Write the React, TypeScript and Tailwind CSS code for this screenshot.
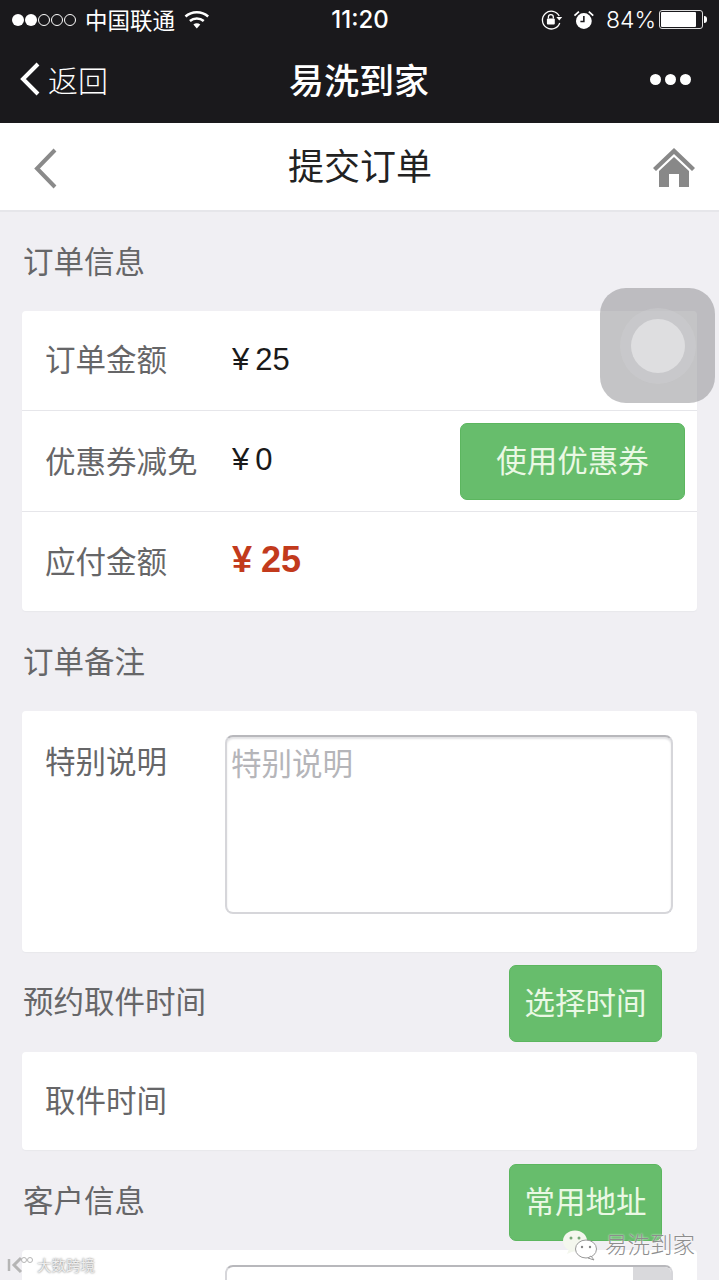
import React from "react";

function Label({ children, className = "pb-[4px]" }: { children: React.ReactNode; className?: string }) {
  return <span className={"w-[185px] shrink-0 text-[30.5px] leading-[40px] text-[#666668] " + className}>{children}</span>;
}
function Green({ children, className = "" }: { children: React.ReactNode; className?: string }) {
  return (
    <div className={"flex h-[77px] items-center justify-center rounded-[7px] border border-[#5cb65f] bg-[#67bd6c] pb-[3px] text-[30.5px] text-[#eaf8e4] " + className}>
      {children}
    </div>
  );
}
function SectionTitle({ children, className = "pb-[2px]" }: { children: React.ReactNode; className?: string }) {
  return <span className={"text-[30.5px] leading-[40px] text-[#666668] " + className}>{children}</span>;
}
function Amount({ value }: { value: string }) {
  return (
    <span className="ml-[2px] flex pb-[2px] font-['Liberation_Sans',sans-serif] text-[31px] leading-[40px] text-[#1a1a1a]">
      <span>¥</span>
      <span className="ml-[6px]">{value}</span>
    </span>
  );
}

export default function App() {
  return (
    <div className="relative h-[1280px] w-[719px] overflow-hidden bg-[#f0eff3] font-['Noto_Sans_CJK_SC','Noto_Sans',sans-serif]">
      {/* dark header */}
      <div className="h-[123px] bg-[#1a191c] text-white">
        <div className="flex h-[39px] items-center pl-[12px] pr-[12px]">
          <div className="flex items-center gap-[1px]">
            <span className="h-[12px] w-[12px] rounded-full bg-white" />
            <span className="h-[12px] w-[12px] rounded-full bg-white" />
            <span className="h-[12px] w-[12px] rounded-full border border-white" />
            <span className="h-[12px] w-[12px] rounded-full border border-white" />
            <span className="h-[12px] w-[12px] rounded-full border border-white" />
          </div>
          <span className="ml-[9px] w-[100px] pb-[2px] text-[22.5px] leading-[30px]">中国联通</span>
          <svg width="26" height="20" viewBox="0 0 26 20">
            <path d="M1.500 6.500C8 .8 18 .8 24.500 6.500" stroke="#fff" strokeWidth="2.600" fill="none" />
            <path d="M6 11C10 7.600 16 7.600 20 11" stroke="#fff" strokeWidth="2.600" fill="none" />
            <path d="M9.500 14.500C11.500 12.800 14.500 12.800 16.500 14.500L13 18.500Z" fill="#fff" />
          </svg>
          <span className="ml-[121px] w-[60px] text-center font-['Inter',sans-serif] text-[24px] font-medium">11:20</span>
          <svg width="24" height="22" viewBox="0 0 24 22" className="ml-[150px]" fill="none">
            <path d="M19.500 7A9 9 0 1 0 20 14" stroke="#fff" strokeWidth="1.300" />
            <path d="M16.500 8h6l-3 3.500z" fill="#fff" />
            <rect x="7" y="9.500" width="8" height="6" rx="1" fill="#fff" />
            <path d="M8.500 9.500V8a2.500 2.500 0 0 1 5 0v1.500" stroke="#fff" strokeWidth="1.300" />
          </svg>
          <svg width="22" height="22" viewBox="0 0 22 22" className="ml-[10px]" fill="none">
            <circle cx="11" cy="12" r="8" fill="#fff" />
            <path d="M11 7v5.500H7.500" stroke="#1a191c" strokeWidth="1.600" />
            <path d="M1.500 6.500 6 2.500M20.500 6.500 16 2.500" stroke="#fff" strokeWidth="1.800" />
          </svg>
          <span className="ml-[11px] w-[48px] font-['Inter',sans-serif] text-[23px] font-light leading-[30px]">84%</span>
          <div className="ml-[5px] flex items-center">
            <div className="h-[19px] w-[44px] rounded-[3px] border border-[#ddd] p-[1px]">
              <div className="h-full w-[35px] rounded-[1px] bg-white" />
            </div>
            <span className="ml-[1px] h-[7px] w-[3px] rounded-r-full bg-white" />
          </div>
        </div>
        <div className="flex h-[84px] items-center pb-[4px]">
          <svg width="24" height="36" viewBox="0 0 24 36" className="ml-[19px]" fill="none">
            <path d="M19 3 4 18l15 15" stroke="#fff" strokeWidth="4" />
          </svg>
          <span className="ml-[5px] w-[80px] text-[30px] font-light">返回</span>
          <span className="ml-[161px] w-[140px] whitespace-nowrap pb-[2px] text-center text-[35px] font-medium leading-none">易洗到家</span>
          <div className="ml-[221px] flex gap-[4px]">
            <span className="h-[11px] w-[11px] rounded-full bg-white" />
            <span className="h-[11px] w-[11px] rounded-full bg-white" />
            <span className="h-[11px] w-[11px] rounded-full bg-white" />
          </div>
        </div>
      </div>

      {/* white title bar */}
      <div className="flex h-[89px] items-center border-b-[2px] border-[#e6e6ea] bg-white">
        <svg width="26" height="42" viewBox="0 0 26 42" className="ml-[32px] mt-[3px]" fill="none">
          <path d="M23 3 5 21.500 23 40" stroke="#8a8a8a" strokeWidth="4" />
        </svg>
        <span className="ml-[230px] w-[143px] whitespace-nowrap pb-[6px] text-center text-[36px] leading-none text-[#222]">提交订单</span>
        <svg width="44" height="42" viewBox="0 0 44 42" className="ml-[221px]">
          <path d="M1 22 22 2l21 20-3 3L22 8 4 25Z" fill="#888" />
          <path d="M7 25 22 11l15 14v16H27V28H17v13H7Z" fill="#888" />
        </svg>
      </div>

      <div className="px-[22px]">
        <div className="flex h-[99px] items-center pl-[1px]">
          <SectionTitle className="pb-[4px]">订单信息</SectionTitle>
        </div>
        <div className="rounded-[4px] bg-white shadow-[0_1px_1px_#e8e8ec]">
          <div className="flex h-[100px] items-center border-b border-[#e6e6ea] pl-[23px]">
            <Label className="pb-[6px]">订单金额</Label>
            <Amount value="25" />
          </div>
          <div className="flex h-[101px] items-center border-b border-[#e6e6ea] pl-[23px] pr-[12px]">
            <Label className="pb-[2px]">优惠券减免</Label>
            <Amount value="0" />
            <Green className="ml-auto w-[225px]">使用优惠券</Green>
          </div>
          <div className="flex h-[99px] items-center pl-[23px]">
            <Label>应付金额</Label>
            <span className="ml-[2px] flex pb-[4px] font-['Liberation_Sans',sans-serif] text-[36px] font-bold leading-[40px] text-[#c23a1c]">
              <span>¥</span>
              <span className="ml-[9px]">25</span>
            </span>
          </div>
        </div>

        <div className="flex h-[100px] items-center pl-[1px]">
          <SectionTitle>订单备注</SectionTitle>
        </div>
        <div className="flex h-[241px] rounded-[4px] bg-white pl-[23px] pr-[24px] pt-[24px] shadow-[0_1px_1px_#e8e8ec]">
          <span className="w-[180px] shrink-0 text-[30.5px] leading-[50px] text-[#666668]">特别说明</span>
          <div className="h-[179px] w-[449px] whitespace-nowrap rounded-[8px] border-2 border-[#d6d6da] border-t-[#b8b8bc] px-[4px] text-[30.5px] leading-[50px] text-[#b5b5b9] shadow-[inset_0_2px_2px_#e2e2e4]">
            特别说明
          </div>
        </div>

        <div className="flex h-[100px] items-center pl-[1px] pr-[35px]">
          <SectionTitle className="pb-[4px]">预约取件时间</SectionTitle>
          <Green className="ml-auto mt-[2px] w-[153px]">选择时间</Green>
        </div>
        <div className="flex h-[98px] items-center rounded-[4px] bg-white pl-[23px] shadow-[0_1px_1px_#e8e8ec]">
          <Label>取件时间</Label>
        </div>

        <div className="flex h-[100px] items-center pl-[1px] pr-[35px]">
          <SectionTitle>客户信息</SectionTitle>
          <Green className="ml-auto mt-[4px] w-[153px]">常用地址</Green>
        </div>
        <div className="flex h-[60px] rounded-[4px] bg-white pl-[203px] pr-[24px] pt-[15px]">
          <div className="flex h-[60px] w-[449px] justify-end overflow-hidden rounded-[8px] border-2 border-[#d6d6da] border-t-[#b8b8bc]">
            <div className="w-[38px] bg-[#d9d9dc]" />
          </div>
        </div>
      </div>

      {/* assistive touch overlay */}
      <div className="absolute left-[600px] top-[288px] flex h-[115px] w-[115px] items-center justify-center rounded-[26px] bg-[#8e8e92]/[.52]">
        <div className="flex h-[76px] w-[76px] items-center justify-center rounded-full bg-[#d0d0d2]/40">
          <div className="h-[54px] w-[54px] rounded-full bg-[#dedee0]" />
        </div>
      </div>

      {/* watermarks */}
      <div className="absolute left-[562px] top-[1228px] flex items-center gap-[7px]">
        <svg width="36" height="32" viewBox="0 0 36 32">
          <ellipse cx="13" cy="12" rx="12" ry="10.500" fill="#f4f7ee" />
          <path d="M7 20 5 25l7-3Z" fill="#f4f7ee" />
          <circle cx="9" cy="9" r="1.500" fill="#77a877" />
          <circle cx="17" cy="9" r="1.500" fill="#77a877" />
          <ellipse cx="24" cy="20" rx="10.500" ry="9" fill="#fff" stroke="#999" strokeWidth="1" />
          <path d="M29 27l3 4-6-2Z" fill="#fff" stroke="#999" strokeWidth="1" />
          <circle cx="20" cy="18" r="1.200" fill="#888" />
          <circle cx="28" cy="18" r="1.200" fill="#888" />
        </svg>
        <span className="pb-[3px] text-[22.5px] font-light leading-[30px] text-[#8d8d8d] [text-shadow:0_0_2px_#fff]">易洗到家</span>
      </div>
      <div className="absolute left-[7px] top-[1255px] flex items-center gap-[4px]">
        <svg width="26" height="20" viewBox="0 0 26 20" fill="none">
          <path d="M2 4v12" stroke="#b5b5b5" strokeWidth="2.500" />
          <path d="M14 3 7 10l7 7" stroke="#b5b5b5" strokeWidth="3" />
          <circle cx="17" cy="5" r="2.500" stroke="#b5b5b5" />
          <circle cx="23" cy="5" r="2.500" stroke="#b5b5b5" />
        </svg>
        <span className="whitespace-nowrap text-[14.500px] leading-[20px] text-[#eeeeee] [text-shadow:0_0_2px_#666]">大数跨境</span>
      </div>
    </div>
  );
}
